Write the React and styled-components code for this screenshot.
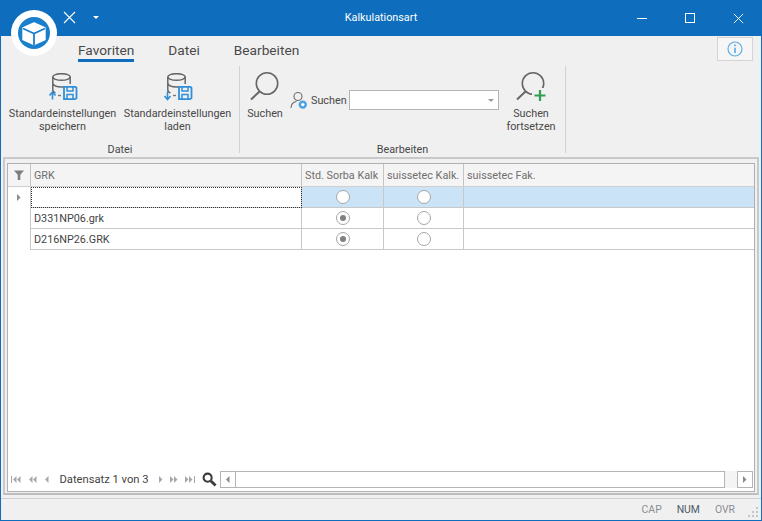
import styled, { createGlobalStyle } from "styled-components";

const GlobalStyle = createGlobalStyle`
    html, body {
        margin: 0;
        padding: 0;
        background: #f0f0f0;
    }
    * {
        box-sizing: border-box;
    }
`;

// ICONS
const CubeLogo = () => (
    <svg width="46" height="46" viewBox="0 0 46 46" fill="none">
        <circle cx="23" cy="23" r="23" fill="#fff" />
        <circle cx="23" cy="23" r="16" fill="#1a80cc" />
        <path d="M23 13 L34 18 V29.5 L23 34.5 L12 29.5 V18 Z" fill="#fff" stroke="#fff" strokeWidth="1.4" strokeLinejoin="round" />
        <path d="M12 18.5 L23 23.5 L34 18.5 M23 23.5 V35" stroke="#1a80cc" strokeWidth="1.8" />
    </svg>
);

const DbIcon = ({ down }) => (
    <svg width="32" height="30" viewBox="0 0 32 30" fill="none">
        <ellipse cx="14.5" cy="4" rx="8.7" ry="3.3" stroke="#666" strokeWidth="1.5" />
        <path d="M5.8 4 V17 C5.8 18.6 7 19.4 8.5 19.9 M23.2 4 V11 M5.8 10.5 C6.8 13 11 14 14.5 14 C15.5 14 16.5 13.9 17.5 13.7" stroke="#666" strokeWidth="1.5" />
        <path d="M17 13.8 H28.5 L29.5 14.8 V25 L28 26.2 H17 Z" stroke="#2f8fd8" strokeWidth="1.8" fill="#f0f0f0" />
        <path d="M20 14 V18 H26 V14 M20 26 V21.5 H26 V26" stroke="#2f8fd8" strokeWidth="1.5" fill="none" />
        {down ? (
            <path d="M5.5 18.5 V26 M2.5 23 L5.5 26.5 L8.5 23" stroke="#2f8fd8" strokeWidth="1.6" />
        ) : (
            <path d="M5.5 26.5 V19.5 M2.5 22.5 L5.5 19 L8.5 22.5" stroke="#2f8fd8" strokeWidth="1.6" />
        )}
        <path d="M11 22.5 H14" stroke="#777" strokeWidth="1.4" />
    </svg>
);

const LensIcon = ({ plus }) => (
    <svg width="34" height="32" viewBox="0 0 34 32" fill="none">
        <circle cx="19" cy="12.5" r="10.7" stroke="#666" strokeWidth="1.6" />
        <path d="M11.5 20.5 L3 28.5" stroke="#666" strokeWidth="2" />
        {plus && (
            <>
                <rect x="18" y="17" width="15" height="14" fill="#f0f0f0" />
                <path d="M26 19 V30 M20.5 24.5 H31.5" stroke="#2e9e4f" strokeWidth="2.2" />
            </>
        )}
    </svg>
);

const PersonIcon = () => (
    <svg width="18" height="19" viewBox="0 0 18 19" fill="none">
        <circle cx="8" cy="5.5" r="4" stroke="#6a6a6a" strokeWidth="1.1" />
        <path d="M1 17 C1 13 3.5 11 6.5 10.5" stroke="#6a6a6a" strokeWidth="1.1" />
        <circle cx="12.8" cy="13.6" r="4.2" fill="#4aa3e6" />
        <circle cx="12.8" cy="13.6" r="1.7" fill="#fff" />
    </svg>
);

const InfoIcon = () => (
    <svg width="16" height="16" viewBox="0 0 16 16" fill="none">
        <circle cx="8" cy="8" r="7" stroke="#5aaee8" strokeWidth="1.2" />
        <path d="M8 6.8 V12" stroke="#5aaee8" strokeWidth="1.7" />
        <path d="M8 3.6 V5.2" stroke="#5aaee8" strokeWidth="1.7" />
    </svg>
);

const CloseGlyph = ({ size = 13 }) => (
    <svg width={size} height={size} viewBox="0 0 13 13" fill="none">
        <path d="M1 1 L12 12 M12 1 L1 12" stroke="#fff" strokeWidth="1.1" />
    </svg>
);

const FilterIcon = () => (
    <svg width="10" height="10" viewBox="0 0 10 10">
        <path d="M0 0.5 H10 L6.3 4.8 V10 H3.7 V4.8 Z" fill="#7d7d7d" />
    </svg>
);

const MagnifierIcon = () => (
    <svg width="15" height="15" viewBox="0 0 16 16" fill="none">
        <circle cx="6" cy="6" r="4.3" stroke="#3c3c3c" strokeWidth="2.2" />
        <path d="M9.5 9.5 L14.5 14.5" stroke="#3c3c3c" strokeWidth="3" />
    </svg>
);

const GripIcon = () => (
    <svg width="10" height="10" viewBox="0 0 10 10">
        <path d="M8 0h2v2H8zM4 4h2v2H4zM8 4h2v2H8zM0 8h2v2H0zM4 8h2v2H4zM8 8h2v2H8z" fill="#c4c4c4" />
    </svg>
);

// pager glyphs: bar = |, count = number of triangles
const PagerGlyph = ({ dir, count = 1, bar, color = "#a8a8a8" }) => {
    const tris = [];
    const width = count * 4 + (bar ? 2 : 0);
    for (let i = 0; i < count; i++) {
        const x = (bar && dir === "left" ? 2 : 0) + i * 4;
        tris.push(
            <path
                key={i}
                d={dir === "left" ? `M${x + 3.5} 1 V8 L${x} 4.5 Z` : `M${x} 1 V8 L${x + 3.5} 4.5 Z`}
                fill={color}
            />
        );
    }
    return (
        <svg width={width} height="9" viewBox={`0 0 ${width} 9`}>
            {tris}
            {bar && <rect x={dir === "left" ? 0 : width - 1} y="1" width="1" height="7" fill={color} />}
        </svg>
    );
};

const Radio = ({ checked }) => (
    <RadioCircle>{checked && <RadioDot />}</RadioCircle>
);

function App() {
    const rows = [
        { name: "", std: false, selected: true },
        { name: "D331NP06.grk", std: true },
        { name: "D216NP26.GRK", std: true },
    ];

    return (
        <Window>
            <GlobalStyle />
            <LogoBadge>
                <CubeLogo />
            </LogoBadge>

            <TitleBar>
                <QuickAccess>
                    <CloseGlyph />
                    <QuickCaret />
                </QuickAccess>
                <Title>Kalkulationsart</Title>
                <WindowButtons>
                    <WinButton>
                        <MinLine />
                    </WinButton>
                    <WinButton>
                        <MaxBox />
                    </WinButton>
                    <WinButton>
                        <CloseGlyph size={11} />
                    </WinButton>
                </WindowButtons>
            </TitleBar>

            <Tabs>
                <Tab $active>Favoriten</Tab>
                <Tab>Datei</Tab>
                <Tab>Bearbeiten</Tab>
                <InfoButton>
                    <InfoIcon />
                </InfoButton>
            </Tabs>

            <Ribbon>
                <RibbonGroup $width={239}>
                    <GroupBody $pad={4}>
                        <LargeButton $width={115}>
                            <IconSlot>
                                <DbIcon />
                            </IconSlot>
                            <span>Standardeinstellungen</span>
                            <span>speichern</span>
                        </LargeButton>
                        <LargeButton $width={115}>
                            <IconSlot>
                                <DbIcon down />
                            </IconSlot>
                            <span>Standardeinstellungen</span>
                            <span>laden</span>
                        </LargeButton>
                    </GroupBody>
                    <GroupTitle>Datei</GroupTitle>
                </RibbonGroup>
                <RibbonGroup $width={326}>
                    <GroupBody $pad={0}>
                        <LargeButton $width={50}>
                            <IconSlot>
                                <LensIcon />
                            </IconSlot>
                            <span>Suchen</span>
                        </LargeButton>
                        <SearchField>
                            <PersonIcon />
                            <SearchLabel>Suchen</SearchLabel>
                            <Combo>
                                <ComboCaret />
                            </Combo>
                        </SearchField>
                        <LargeButton $width={54}>
                            <IconSlot>
                                <LensIcon plus />
                            </IconSlot>
                            <span>Suchen</span>
                            <span>fortsetzen</span>
                        </LargeButton>
                    </GroupBody>
                    <GroupTitle>Bearbeiten</GroupTitle>
                </RibbonGroup>
            </Ribbon>

            <GridFrame>
                <GridInner>
                    <HeaderRow>
                        <FilterCell>
                            <FilterIcon />
                        </FilterCell>
                        <HeaderCell>GRK</HeaderCell>
                        <HeaderCell>Std. Sorba Kalk</HeaderCell>
                        <HeaderCell>suissetec Kalk.</HeaderCell>
                        <HeaderCell>suissetec Fak.</HeaderCell>
                    </HeaderRow>
                    {rows.map((row, index) => (
                        <DataRow key={index}>
                            <Indicator>
                                {row.selected && <PagerGlyph dir="right" color="#8a8a8a" />}
                            </Indicator>
                            <NameCell $focused={row.selected}>{row.name}</NameCell>
                            <RadioCell $selected={row.selected}>
                                <Radio checked={row.std} />
                            </RadioCell>
                            <RadioCell $selected={row.selected}>
                                <Radio />
                            </RadioCell>
                            <BlankCell $selected={row.selected} />
                        </DataRow>
                    ))}
                    <GridSpace />
                    <Pager>
                        <PagerButtons>
                            <PagerGlyph dir="left" count={2} bar />
                            <PagerGlyph dir="left" count={2} />
                            <PagerGlyph dir="left" />
                        </PagerButtons>
                        <PagerText>Datensatz 1 von 3</PagerText>
                        <PagerButtons $gap={7}>
                            <PagerGlyph dir="right" />
                            <PagerGlyph dir="right" count={2} />
                            <PagerGlyph dir="right" count={2} bar />
                        </PagerButtons>
                        <PagerSearch>
                            <MagnifierIcon />
                        </PagerSearch>
                        <ScrollBar>
                            <ScrollButton>
                                <PagerGlyph dir="left" color="#8a8a8a" />
                            </ScrollButton>
                            <ScrollThumb />
                            <ScrollButton>
                                <PagerGlyph dir="right" color="#8a8a8a" />
                            </ScrollButton>
                        </ScrollBar>
                    </Pager>
                </GridInner>
            </GridFrame>

            <StatusBar>
                <StatusItem>CAP</StatusItem>
                <StatusItem $on>NUM</StatusItem>
                <StatusItem>OVR</StatusItem>
                <Grip>
                    <GripIcon />
                </Grip>
            </StatusBar>
        </Window>
    );
}

export default App;

const Window = styled.div`
    position: relative;
    width: 762px;
    height: 521px;
    display: flex;
    flex-direction: column;
    background: #f0f0f0;
    border: 1px solid #0e6ebd;
    border-top: none;
    overflow: hidden;
    font-family: Roboto, "Liberation Sans", sans-serif;
    font-size: 10.8px;
    color: #484848;
`;

const LogoBadge = styled.div`
    position: absolute;
    z-index: 2;
    left: 10px;
    top: 10px;
    width: 46px;
    height: 46px;
`;

const TitleBar = styled.div`
    height: 36px;
    flex: none;
    margin: 0 -1px;
    background: #0e6ebd;
    color: #fff;
    display: flex;
    align-items: center;
    position: relative;
`;

const QuickAccess = styled.div`
    display: flex;
    align-items: center;
    gap: 17px;
    margin-left: 63px;
    margin-top: -1px;
`;

const QuickCaret = styled.i`
    display: block;
    width: 0;
    height: 0;
    border-left: 3px solid transparent;
    border-right: 3px solid transparent;
    border-top: 3px solid #fff;
`;

const Title = styled.div`
    position: absolute;
    left: 0;
    right: 0;
    top: 11px;
    text-align: center;
    font-size: 10.8px;
    line-height: 14px;
`;

const WindowButtons = styled.div`
    display: flex;
    margin-left: auto;
`;

const WinButton = styled.div`
    width: 48px;
    height: 24px;
    display: flex;
    align-items: center;
    justify-content: center;
`;

const MinLine = styled.i`
    display: block;
    width: 10px;
    height: 1px;
    background: #fff;
`;

const MaxBox = styled.i`
    display: block;
    width: 10px;
    height: 10px;
    border: 1px solid #fff;
`;

const Tabs = styled.div`
    height: 28px;
    flex: none;
    display: flex;
    gap: 34px;
    padding-left: 77px;
    padding-top: 5px;
    position: relative;
`;

const Tab = styled.div`
    height: 21px;
    font-size: 13.7px;
    line-height: 18px;
    color: #4a4a4a;
    border-bottom: 3px solid ${({ $active }) => ($active ? "#0e6ebd" : "transparent")};
`;

const InfoButton = styled.div`
    position: absolute;
    right: 8px;
    top: 1px;
    width: 36px;
    height: 24px;
    background: #f6f6f6;
    border: 1px solid #d4d4d4;
    display: flex;
    align-items: center;
    justify-content: center;
`;

const Ribbon = styled.div`
    height: 93px;
    flex: none;
    display: flex;
    padding-top: 2px;
`;

const RibbonGroup = styled.div`
    width: ${({ $width }) => $width}px;
    height: 87px;
    border-right: 1px solid #d2d2d2;
    display: flex;
    flex-direction: column;
    align-items: center;
`;

const GroupBody = styled.div`
    flex: 1;
    align-self: stretch;
    display: flex;
    padding-left: ${({ $pad }) => $pad}px;
`;

const GroupTitle = styled.div`
    height: 14px;
    line-height: 14px;
    margin-bottom: -4px;
    text-align: center;
`;

const LargeButton = styled.div`
    width: ${({ $width }) => $width}px;
    flex: none;
    display: flex;
    flex-direction: column;
    align-items: center;
    line-height: 13px;
    white-space: nowrap;
`;

const IconSlot = styled.div`
    height: 37px;
    display: flex;
    align-items: flex-end;
    justify-content: center;
    margin-bottom: 4px;
`;

const SearchField = styled.div`
    height: 20px;
    margin-top: 24px;
    display: flex;
    align-items: center;
    flex: none;
    width: 218px;
    margin-right: -4px;
`;

const SearchLabel = styled.span`
    width: 37px;
    margin: 0 2px 0 3px;
    white-space: nowrap;
`;

const Combo = styled.div`
    width: 150px;
    height: 20px;
    margin-left: -1px;
    background: #fff;
    border: 1px solid #b4b4b4;
    position: relative;
`;

const ComboCaret = styled.i`
    position: absolute;
    right: 4px;
    top: 8px;
    width: 0;
    height: 0;
    border-left: 3px solid transparent;
    border-right: 3px solid transparent;
    border-top: 3px solid #9a9a9a;
`;

const GridFrame = styled.div`
    flex: none;
    height: 338px;
    margin: 0 2px;
    padding: 4px 2px 1px;
    border: 2px solid #c9c9c9;
    border-bottom-color: #bdbdbd;
`;

const GridInner = styled.div`
    height: 100%;
    background: #fff;
    border: 1px solid #b0b0b0;
    display: flex;
    flex-direction: column;
`;

const HeaderRow = styled.div`
    height: 23px;
    flex: none;
    display: grid;
    grid-template-columns: 23px 271px 82px 80px 1fr;
    grid-template-rows: 22px;
    background: #f4f4f4;
    border-bottom: 1px solid #d0d0d0;
`;

const FilterCell = styled.div`
    display: flex;
    align-items: center;
    justify-content: center;
    border-right: 1px solid #c4c4c4;
`;

const HeaderCell = styled.div`
    padding-left: 3px;
    line-height: 23px;
    color: #6e6e6e;
    white-space: nowrap;
    overflow: hidden;
    border-right: 1px solid #c4c4c4;
    &:last-child {
        border-right: none;
    }
`;

const DataRow = styled.div`
    height: 21px;
    flex: none;
    display: grid;
    grid-template-columns: 23px 271px 82px 80px 1fr;
    grid-template-rows: 21px;
`;

const Indicator = styled.div`
    display: flex;
    align-items: center;
    justify-content: center;
    background: #fff;
    border-right: 1px solid #c8c8c8;
`;

const NameCell = styled.div`
    height: 21px;
    padding-left: 3px;
    line-height: 21px;
    color: #444;
    border-bottom: 1px solid #c8c8c8;
    border-right: 1px solid #c8c8c8;
    outline: ${({ $focused }) => ($focused ? "1px dotted #333" : "none")};
    outline-offset: -1px;
`;

const RadioCell = styled.div`
    display: flex;
    align-items: center;
    justify-content: center;
    background: ${({ $selected }) => ($selected ? "#cbe3f7" : "#fff")};
    border-bottom: 1px solid #c8c8c8;
    border-right: 1px solid #c8c8c8;
`;

const BlankCell = styled.div`
    background: ${({ $selected }) => ($selected ? "#cbe3f7" : "#fff")};
    border-bottom: 1px solid #c8c8c8;
`;

const RadioCircle = styled.div`
    width: 14px;
    height: 14px;
    border-radius: 50%;
    background: #fff;
    border: 1px solid #a6a6a6;
    display: flex;
    align-items: center;
    justify-content: center;
`;

const RadioDot = styled.div`
    width: 6px;
    height: 6px;
    border-radius: 50%;
    background: #808080;
`;

const GridSpace = styled.div`
    flex: 1;
`;

const Pager = styled.div`
    height: 23px;
    flex: none;
    display: flex;
    align-items: center;
    padding-left: 3px;
`;

const PagerButtons = styled.div`
    display: flex;
    align-items: center;
    gap: ${({ $gap }) => $gap || 8}px;
`;

const PagerText = styled.span`
    width: 110px;
    text-align: center;
    font-size: 11.2px;
    color: #444;
`;

const PagerSearch = styled.div`
    display: flex;
    margin-left: 7px;
    margin-right: 3px;
`;

const ScrollBar = styled.div`
    flex: 1;
    height: 17px;
    display: flex;
    justify-content: space-between;
    margin-right: 1px;
    background: #f4f4f4;
`;

const ScrollButton = styled.div`
    width: 16px;
    height: 17px;
    background: #fff;
    border: 1px solid #b4b4b4;
    display: flex;
    align-items: center;
    justify-content: center;
`;

const ScrollThumb = styled.div`
    flex: 1;
    margin-left: -1px;
    margin-right: 12px;
    background: #fff;
    border: 1px solid #b4b4b4;
`;

const StatusBar = styled.div`
    flex: 1;
    margin-top: 3px;
    border-top: 1px solid #d0d0d0;
    display: flex;
    align-items: center;
    justify-content: flex-end;
    gap: 15px;
    padding-right: 26px;
    position: relative;
    font-size: 10.4px;
`;

const StatusItem = styled.span`
    color: ${({ $on }) => ($on ? "#4a5a6a" : "#8a8f94")};
`;

const Grip = styled.div`
    position: absolute;
    right: 3px;
    bottom: 3px;
    display: flex;
`;
